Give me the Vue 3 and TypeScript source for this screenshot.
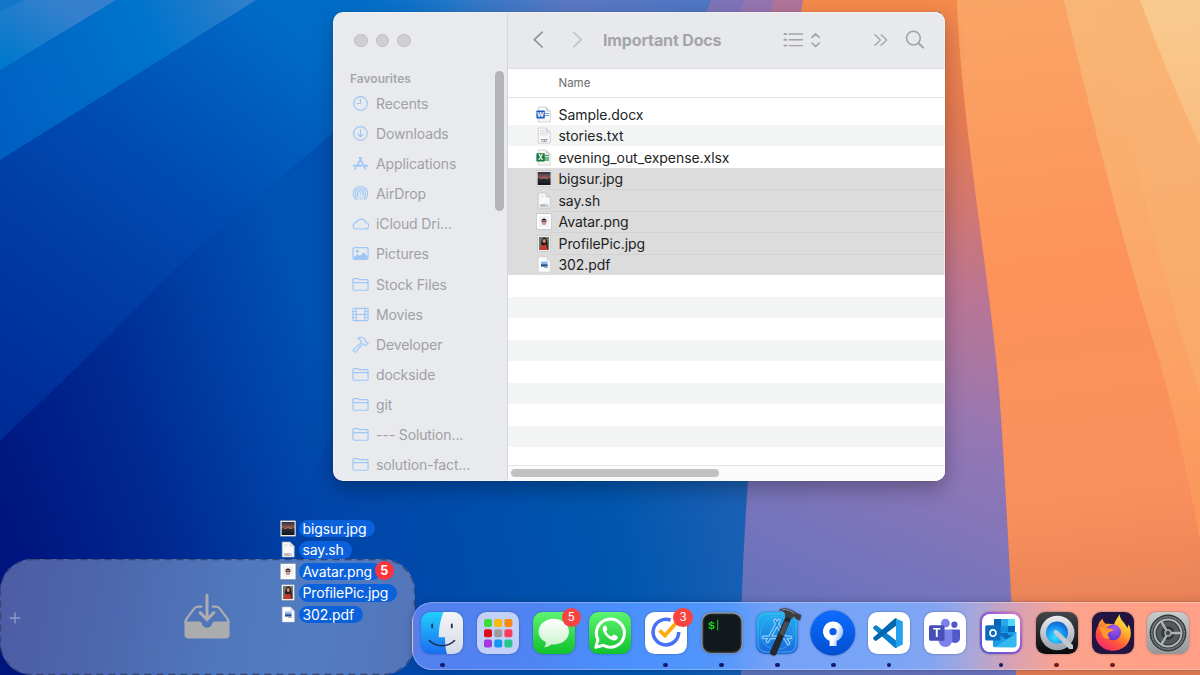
<script setup lang="ts">
interface Entry {
  name: string
  kind: string
}

interface DockApp {
  id: string
  running: boolean
  badge?: number
}

const sidebar: Entry[] = [
  { name: 'Recents', kind: 'clock' },
  { name: 'Downloads', kind: 'download' },
  { name: 'Applications', kind: 'apps' },
  { name: 'AirDrop', kind: 'airdrop' },
  { name: 'iCloud Dri...', kind: 'cloud' },
  { name: 'Pictures', kind: 'picture' },
  { name: 'Stock Files', kind: 'folder' },
  { name: 'Movies', kind: 'film' },
  { name: 'Developer', kind: 'hammer' },
  { name: 'dockside', kind: 'folder' },
  { name: 'git', kind: 'folder' },
  { name: '--- Solution...', kind: 'folder' },
  { name: 'solution-fact...', kind: 'folder' },
]

const picked: Entry[] = [
  { name: 'bigsur.jpg', kind: 'landscape' },
  { name: 'say.sh', kind: 'shell' },
  { name: 'Avatar.png', kind: 'avatar' },
  { name: 'ProfilePic.jpg', kind: 'profile' },
  { name: '302.pdf', kind: 'pdf' },
]

const files: Entry[] = [
  { name: 'Sample.docx', kind: 'word' },
  { name: 'stories.txt', kind: 'text' },
  { name: 'evening_out_expense.xlsx', kind: 'excel' },
  ...picked,
]

const rows: (Entry | null)[] = [...files, ...Array<null>(9).fill(null)]
const isPicked = (row: Entry | null) => row !== null && picked.includes(row)

const dock: DockApp[] = [
  { id: 'finder', running: true },
  { id: 'launchpad', running: false },
  { id: 'messages', running: false, badge: 5 },
  { id: 'whatsapp', running: false },
  { id: 'ticktick', running: true, badge: 3 },
  { id: 'terminal', running: true },
  { id: 'xcode', running: true },
  { id: 'sourcetree', running: true },
  { id: 'vscode', running: true },
  { id: 'teams', running: false },
  { id: 'outlook', running: true },
  { id: 'quicktime', running: true },
  { id: 'firefox', running: true },
  { id: 'settings', running: false },
]

const tiles = [
  ['#3ddc3a', '#f9b80c', '#f98a10'],
  ['#d90f1a', '#9a9a9f', '#fb3b5c'],
  ['#a03be0', '#1596f5', '#25c78e'],
]
</script>

<template>
  <div class="desktop">
    <svg class="wallpaper" viewBox="0 0 1200 675" preserveAspectRatio="none">
      <defs>
        <linearGradient id="wBase" gradientUnits="userSpaceOnUse" x1="0" y1="520" x2="340" y2="400">
          <stop offset="0" stop-color="#00147e" />
          <stop offset=".4" stop-color="#002890" />
          <stop offset=".7" stop-color="#003da2" />
          <stop offset="1" stop-color="#0052b2" />
        </linearGradient>
        <linearGradient id="wBand2" gradientUnits="userSpaceOnUse" x1="0" y1="400" x2="290" y2="20">
          <stop offset="0" stop-color="#002c98" />
          <stop offset=".3" stop-color="#003ba2" />
          <stop offset=".6" stop-color="#004cb2" />
          <stop offset="1" stop-color="#006cc8" />
        </linearGradient>
        <linearGradient id="wBand1" gradientUnits="userSpaceOnUse" x1="0" y1="120" x2="240" y2="0">
          <stop offset="0" stop-color="#0060c2" />
          <stop offset=".65" stop-color="#0074cc" />
          <stop offset="1" stop-color="#2e7ecb" />
        </linearGradient>
        <linearGradient id="wBand0" gradientUnits="userSpaceOnUse" x1="10" y1="65" x2="50" y2="0">
          <stop offset="0" stop-color="#0078cc" />
          <stop offset="1" stop-color="#3580cc" />
        </linearGradient>
        <linearGradient id="wTop" x1="0" x2="1" y1="0" y2="0">
          <stop offset="0" stop-color="#0076ce" stop-opacity="0" />
          <stop offset=".35" stop-color="#3078c8" />
          <stop offset=".6" stop-color="#5b78c4" />
          <stop offset="1" stop-color="#4c76c4" />
        </linearGradient>
        <linearGradient id="wBottom" gradientUnits="userSpaceOnUse" x1="240" y1="600" x2="760" y2="480">
          <stop offset="0" stop-color="#003ca4" stop-opacity="0" />
          <stop offset=".3" stop-color="#0048aa" />
          <stop offset=".7" stop-color="#0055ae" />
          <stop offset="1" stop-color="#1f62b6" />
        </linearGradient>
        <linearGradient id="wPurple" gradientUnits="userSpaceOnUse" x1="760" y1="660" x2="960" y2="200">
          <stop offset="0" stop-color="#5a70b8" />
          <stop offset=".25" stop-color="#7474bc" />
          <stop offset=".6" stop-color="#9577b4" />
          <stop offset=".85" stop-color="#b87696" />
          <stop offset="1" stop-color="#d9745c" />
        </linearGradient>
        <linearGradient id="wEdge" gradientUnits="userSpaceOnUse" x1="0" y1="0" x2="0" y2="480">
          <stop offset="0" stop-color="#f58a4c" />
          <stop offset=".25" stop-color="#e57a52" />
          <stop offset=".6" stop-color="#bd7590" stop-opacity=".8" />
          <stop offset="1" stop-color="#9577b4" stop-opacity="0" />
        </linearGradient>
        <linearGradient id="wOrange" gradientUnits="userSpaceOnUse" x1="970" y1="0" x2="1060" y2="675">
          <stop offset="0" stop-color="#f9a566" />
          <stop offset=".4" stop-color="#fd935a" />
          <stop offset=".75" stop-color="#f98f5c" />
          <stop offset="1" stop-color="#e07c54" />
        </linearGradient>
        <linearGradient id="wOrange2" gradientUnits="userSpaceOnUse" x1="1090" y1="0" x2="1200" y2="540">
          <stop offset="0" stop-color="#f8b676" />
          <stop offset=".5" stop-color="#fba869" />
          <stop offset="1" stop-color="#fb955c" />
        </linearGradient>
        <linearGradient id="wOrange3" gradientUnits="userSpaceOnUse" x1="1170" y1="0" x2="1200" y2="420">
          <stop offset="0" stop-color="#f9ca8e" />
          <stop offset="1" stop-color="#faa769" />
        </linearGradient>
      </defs>
      <rect width="1200" height="675" fill="url(#wBase)" />
      <path d="M-1 442L100 345L180 264L335 131H520V0H0Z" fill="url(#wBand2)" />
      <path d="M0 160L256 0H0Z" fill="url(#wBand1)" />
      <path d="M0 70L116 0H0Z" fill="url(#wBand0)" />
      <path d="M0 12L24 0H0Z" fill="#1277c8" />
      <rect x="330" width="400" height="300" fill="url(#wTop)" />
      <path d="M335 430L300 500L270 675H760V430Z" fill="url(#wBottom)" />
      <path d="M706 12L711 0H820V300H800Z" fill="#7f74b9" />
      <path d="M740 12L744 0H820V40H740Z" fill="#9575b0" />
      <path d="M770 12L774 0H820V40H770Z" fill="#b0749a" />
      <path d="M748 480C744 540 740 610 741 675H1020V300H760Z" fill="url(#wPurple)" />
      <path d="M930 90H1000V480H930Z" fill="url(#wPurple)" />
      <path d="M801 12L803 0H962L1004 480H940V12Z" fill="url(#wEdge)" />
      <path d="M957 0C960 110 990 280 999 390C1006 480 1010 590 1016 675H1200V0Z" fill="url(#wOrange)" />
      <path d="M1064 0C1087 100 1128 260 1150 330C1172 400 1187 470 1200 540V0Z" fill="url(#wOrange2)" />
      <path d="M1092 0C1125 115 1160 270 1200 395V0Z" fill="#f9b473" opacity=".45" />
      <path d="M1140 0C1160 55 1180 102 1200 145V0Z" fill="url(#wOrange3)" />
    </svg>

    <section class="window">
      <aside class="side">
        <div class="lights"><i /><i /><i /></div>
        <h2>Favourites</h2>
        <ul>
          <li v-for="item in sidebar" :key="item.name">
            <svg viewBox="0 0 18 18" class="side-icon">
              <g v-if="item.kind === 'clock'">
                <circle cx="9" cy="9" r="7.2" />
                <path d="M9 4.8V9H5.6" />
              </g>
              <g v-else-if="item.kind === 'download'">
                <circle cx="9" cy="9" r="7.2" />
                <path d="M9 5.2V12.2M6.3 9.7L9 12.4L11.7 9.7" />
              </g>
              <g v-else-if="item.kind === 'apps'" class="bold">
                <path d="M10 3L5 11.8M8 3L14 14.4M1.8 11.4H10M13.2 11.4H16.2M4 13.6L3.4 14.6" />
              </g>
              <g v-else-if="item.kind === 'airdrop'">
                <path d="M5 15.6A7.7 7.7 0 1 1 13 15.6" />
                <path d="M5.6 13.2A5.4 5.4 0 1 1 12.4 13.2" />
                <path d="M6.7 11A3.1 3.1 0 1 1 11.3 11" />
                <circle cx="9" cy="9" r="1" class="solid" />
                <path d="M9 10.5L6.3 15.6H11.7Z" class="solid" opacity=".45" />
              </g>
              <path
                v-else-if="item.kind === 'cloud'"
                d="M4 14.8H14.4A3.3 3.3 0 0 0 14.7 8.2A4.9 4.9 0 0 0 5.5 7.1A2.9 2.9 0 0 0 2.8 9.1A3 3 0 0 0 4 14.8Z"
              />
              <g v-else-if="item.kind === 'picture'">
                <rect x="1" y="2.8" width="16" height="12.4" rx="1.6" />
                <circle cx="5.6" cy="6.6" r="1.5" class="solid" />
                <path d="M1.4 13L6 9.8L8.4 11.7L12 7.8L16.6 11.8V14.9H1.4Z" class="solid" />
              </g>
              <g v-else-if="item.kind === 'film'">
                <rect x="1" y="2.6" width="16" height="12.8" rx="1.2" />
                <path d="M4.5 2.6V15.4M13.5 2.6V15.4M4.5 9H13.5M1 5.8H4.5M1 9H4.5M1 12.2H4.5M13.5 5.8H17M13.5 9H17M13.5 12.2H17" />
              </g>
              <path
                v-else-if="item.kind === 'hammer'"
                d="M6.2 2.8C8.6 .4 11.4 1.1 13.2 3L14.2 4.2L14 5.4L15.2 6.5L17.2 7.6L14.4 10.4L12.8 8.6L11.4 8.2L4.2 16.6C2.6 17.7 .7 16 1.6 14.4L9.8 7.1L9.6 5C8.8 3.5 7.6 3 6.2 2.8Z"
              />
              <path
                v-else
                d="M1 7H17M1 4.6V13.8A1.3 1.3 0 0 0 2.3 15.1H15.7A1.3 1.3 0 0 0 17 13.8V5.2A1.3 1.3 0 0 0 15.7 3.9H8.2L6.7 2.8H2.3A1.3 1.3 0 0 0 1 4.1Z"
              />
            </svg>
            <span>{{ item.name }}</span>
          </li>
        </ul>
        <div class="v-thumb" />
      </aside>

      <main class="pane">
        <header class="toolbar">
          <svg class="nav" viewBox="0 0 52 20">
            <path d="M12.2 2.2L4.3 9.6L12.2 17" stroke="#8e8f93" />
            <path d="M43.6 2.4L51.2 9.6L43.6 16.8" stroke="#c2c3c7" />
          </svg>
          <h1>Important Docs</h1>
          <svg class="view" viewBox="0 0 40 20">
            <path d="M6 4H19.5M6 9.8H19.5M6 15.6H19.5" />
            <path d="M1.4 4H3.2M1.4 9.8H3.2M1.4 15.6H3.2" stroke-width="1.9" />
            <path d="M29 7.3L32.6 3.8L36.2 7.3M29 13L32.6 16.5L36.2 13" stroke-width="1.7" />
          </svg>
          <svg class="more" viewBox="0 0 14 14"><path d="M1 1.7L6.4 7L1 12.3M7.2 1.7L12.6 7L7.2 12.3" /></svg>
          <svg class="search" viewBox="0 0 20 20">
            <circle cx="8.4" cy="8.1" r="6.9" stroke-width="1.6" />
            <path d="M13.4 13L18 17.4" stroke-width="2.1" />
          </svg>
        </header>
        <div class="head">Name</div>
        <ul class="rows">
          <li v-for="(row, i) in rows" :key="i" :class="{ picked: isPicked(row) }">
            <template v-if="row">
              <svg class="file-icon"><use :href="'#file-' + row.kind" /></svg>
              <span>{{ row.name }}</span>
            </template>
          </li>
        </ul>
        <footer class="h-track"><div class="h-thumb" /></footer>
      </main>
    </section>

    <svg class="symbols" width="0" height="0">
      <defs>
        <linearGradient id="dusk" x1="0" y1="0" x2="0" y2="1">
          <stop offset="0" stop-color="#2b2d40" />
          <stop offset=".4" stop-color="#8b5a50" />
          <stop offset=".55" stop-color="#2c2b35" />
          <stop offset="1" stop-color="#11151f" />
        </linearGradient>
        <symbol id="file-page" viewBox="0 0 16 17">
          <path d="M2.2 1H10L14.2 5.2V16H2.2Z" fill="#f8f8f9" stroke="#b9babd" stroke-width=".6" />
          <path d="M10 1V5.2H14.2Z" fill="#dcdde0" stroke="#b9babd" stroke-width=".4" />
        </symbol>
        <symbol id="file-word" viewBox="0 0 16 17">
          <use href="#file-page" />
          <path d="M8.5 7.5H13M8.5 9.5H13" stroke="#6ca4ef" stroke-width="1.1" />
          <rect x=".4" y="4.4" width="8.4" height="8.2" rx=".8" fill="#1f5bbd" />
          <text x="4.6" y="11" text-anchor="middle" font-size="6.8" font-weight="700" fill="#fff">W</text>
        </symbol>
        <symbol id="file-excel" viewBox="0 0 16 17">
          <use href="#file-page" />
          <path d="M8.5 6.6H13M8.5 9H13M8.5 11H13" stroke="#3fa36a" stroke-width="1.3" />
          <rect x=".4" y="4.2" width="8.4" height="8.4" rx=".8" fill="#14783f" />
          <text x="4.6" y="10.9" text-anchor="middle" font-size="7" font-weight="700" fill="#fff">X</text>
        </symbol>
        <symbol id="file-text" viewBox="0 0 16 17">
          <use href="#file-page" />
          <path d="M4 3.5H9M4 5H9M4 6.5H12M4 8H12" stroke="#d0d0d2" stroke-width=".6" />
          <text x="8.2" y="14.6" text-anchor="middle" font-size="3.4" font-weight="700" fill="#666">TXT</text>
        </symbol>
        <symbol id="file-shell" viewBox="0 0 16 17">
          <use href="#file-page" />
          <path d="M4 3.5H7M4 5H8" stroke="#d8d8da" stroke-width=".6" />
          <text x="8.2" y="14.6" text-anchor="middle" font-size="2.8" font-weight="700" fill="#777">SHELL</text>
        </symbol>
        <symbol id="file-landscape" viewBox="0 0 16 17">
          <rect x=".5" y=".8" width="15.2" height="15.4" fill="#fff" stroke="#aaa" stroke-width=".4" />
          <rect x="1.6" y="1.9" width="13" height="13.2" fill="url(#dusk)" />
          <path d="M4 8.8Q8 6.5 12 8.6" stroke="#c9825c" stroke-width=".8" fill="none" />
        </symbol>
        <symbol id="file-avatar" viewBox="0 0 16 17">
          <rect x=".5" y=".8" width="15.2" height="15.4" fill="#fff" stroke="#aaa" stroke-width=".5" />
          <rect x="2.6" y="2.8" width="11" height="11.4" fill="#f1f2f5" />
          <ellipse cx="8" cy="8.9" rx="2.4" ry="3.1" fill="#c59e92" />
          <path d="M5.4 8.2C5 4.6 11 4.6 10.6 8.2L10 7.2H6Z" fill="#2c2529" />
          <path d="M5.8 8.4H7.6M8.4 8.4H10.2" stroke="#3a2c30" stroke-width="1" />
        </symbol>
        <symbol id="file-profile" viewBox="0 0 16 17">
          <rect x="1.8" y=".8" width="12.4" height="15.4" fill="#fff" stroke="#aaa" stroke-width=".4" />
          <rect x="2.9" y="1.9" width="10.2" height="13.2" fill="#6b7a6a" />
          <path d="M5.4 15C4.6 10 5 3 8.2 2.6C11.6 3 12 9 11.6 15Z" fill="#2a1518" />
          <ellipse cx="8.2" cy="6" rx="1.6" ry="2.1" fill="#d09078" />
          <path d="M3.4 15.1L5.6 9.6L8 10.6L10 9L11.4 15.1Z" fill="#c8382e" />
        </symbol>
        <symbol id="file-pdf" viewBox="0 0 16 17">
          <path d="M2.2 1H10.4L14.4 5V16H2.2Z" fill="#fbfcfe" stroke="#c4c5c9" stroke-width=".5" />
          <path d="M10.4 1V5H14.4Z" fill="#dcdfe6" />
          <rect x="5" y="5.6" width="6.6" height="2.6" fill="#8fb9ee" />
          <rect x="5" y="8.2" width="6.6" height="2.4" fill="#24508e" />
          <path d="M8 11.6H12" stroke="#888" stroke-width=".7" />
        </symbol>
      </defs>
    </svg>

    <section class="drop">
      <svg class="outline" viewBox="0 0 415 116"><rect x=".6" y=".6" width="413.8" height="114.8" rx="32" /></svg>
      <svg class="plus" viewBox="0 0 12 12"><path d="M6 .6V11.4M.6 6H11.4" /></svg>
      <svg class="tray" viewBox="0 0 46 46">
        <path d="M.5 27.5H14.8C16.6 27.5 17.6 28.2 17.9 29.8C19 35.2 27 35.2 28.1 29.8C28.4 28.2 29.4 27.5 31.2 27.5H45.5V40.5A4 4 0 0 1 41.5 44.5H4.5A4 4 0 0 1 .5 40.5Z" fill="#abacae" />
        <path d="M1.4 28.4C1.4 26.6 1.8 25.6 3 24.2L10.4 14.4C11.4 13.1 12.6 12.6 14.2 12.6H17.4M28.6 12.6H31.8C33.4 12.6 34.6 13.1 35.6 14.4L43 24.2C44.2 25.6 44.6 26.6 44.6 28.4" />
        <path d="M23 1.4V25.6M16.2 18.6L23 25.8L29.8 18.6" stroke-width="3" />
      </svg>
    </section>

    <ul class="drag">
      <li v-for="item in picked" :key="item.name">
        <svg class="file-icon"><use :href="'#file-' + item.kind" /></svg>
        <span>{{ item.name }}</span>
      </li>
    </ul>
    <b class="count">{{ picked.length }}</b>

    <nav class="dock">
      <div v-for="app in dock" :key="app.id" class="app">
        <svg viewBox="0 0 42 42" class="app-icon">
          <g v-if="app.id === 'finder'">
            <defs>
              <linearGradient id="fBlue" x1="0" y1="0" x2="0" y2="1"><stop offset="0" stop-color="#1fd0fd" /><stop offset="1" stop-color="#1b6cf0" /></linearGradient>
              <linearGradient id="fWhite" x1="0" y1="0" x2="0" y2="1"><stop offset="0" stop-color="#f4f5f8" /><stop offset="1" stop-color="#d5dae6" /></linearGradient>
            </defs>
            <rect width="42" height="42" rx="9.5" fill="url(#fBlue)" />
            <path d="M22.6 0H32.5A9.5 9.5 0 0 1 42 9.5V32.5A9.5 9.5 0 0 1 32.5 42H26C24.8 38 24 32 24 25.2H17.8C17.8 16 19.6 6.5 22.6 0Z" fill="url(#fWhite)" />
            <path d="M11.2 12.4V15.4M30.8 12.4V15.4" stroke="#15395c" stroke-width="1.9" stroke-linecap="round" />
            <path d="M8.4 28.5C15 35.4 27 35.4 33.6 28.5" fill="none" stroke="#1b2a44" stroke-width="1.5" stroke-linecap="round" />
          </g>
          <g v-else-if="app.id === 'launchpad'">
            <rect width="42" height="42" rx="9.5" fill="#c3d1f8" />
            <template v-for="(line, r) in tiles" :key="r">
              <rect v-for="(fill, c) in line" :key="c" :x="7 + c * 10.2" :y="7 + r * 10.2" width="8" height="8" rx="2" :fill="fill" />
            </template>
          </g>
          <g v-else-if="app.id === 'messages'">
            <defs>
              <linearGradient id="gGreen" x1="0" y1="0" x2="0" y2="1"><stop offset="0" stop-color="#5df471" /><stop offset="1" stop-color="#10c22d" /></linearGradient>
              <linearGradient id="gBubble" x1="0" y1="0" x2="0" y2="1"><stop offset="0" stop-color="#fff" /><stop offset="1" stop-color="#c9f3cb" /></linearGradient>
            </defs>
            <rect width="42" height="42" rx="9.5" fill="url(#gGreen)" />
            <path d="M20.8 6.8C12.4 6.8 5.6 12.4 5.6 19.6C5.6 24 8.4 28 12.9 30.2C13 32 12.2 33.8 10.9 35.2C13.9 35.2 16.6 34 18.3 32.2C28.5 33.6 36 27.6 36 19.6C36 12.4 29.2 6.8 20.8 6.8Z" fill="url(#gBubble)" />
          </g>
          <g v-else-if="app.id === 'whatsapp'">
            <rect width="42" height="42" rx="9.5" fill="url(#gGreen)" />
            <path d="M6.8 35.4L9 27.6A14 14 0 1 1 14.4 33.2Z" fill="none" stroke="#fff" stroke-width="3" stroke-linejoin="round" />
            <path d="M15.8 13.6C14 14.4 13.2 16.6 14 18.8C15.6 23.4 19 26.6 23.6 28.2C25.8 29 28.2 27.8 28.8 26C29.2 24.6 28.8 24.4 27.6 23.8L25.4 22.7C24.6 22.3 24.2 22.6 23.8 23.2C22.9 24.5 22.6 24.5 21.4 23.9C19.6 23 18.4 21.8 17.4 20C17 19.2 17.4 19 18 18.2C18.4 17.6 18.4 17.2 18.2 16.6L17.2 14.2C16.9 13.4 16.4 13.4 15.8 13.6Z" fill="#fff" />
          </g>
          <g v-else-if="app.id === 'ticktick'">
            <rect width="42" height="42" rx="9.5" fill="#fff" />
            <path d="M25.6 8.2A12.8 12.8 0 1 0 33.7 20" fill="none" stroke="#4870f5" stroke-width="3.5" />
            <path d="M14.6 18.4L20 23.6L31.5 10.5" fill="none" stroke="#ffab0d" stroke-width="3.8" />
          </g>
          <g v-else-if="app.id === 'terminal'">
            <rect x=".5" y=".5" width="41" height="41" rx="9.5" fill="#a7aaa9" />
            <rect x="1.4" y="1.5" width="39.2" height="39.4" rx="8.6" fill="#343638" />
            <rect x="2.6" y="2.6" width="36.8" height="36.8" rx="7.6" fill="#11191c" />
            <text x="7" y="17.2" class="mono" font-size="11.5" font-weight="700" fill="#1fd91f">$</text>
            <path d="M16.6 7.8V18.4" stroke="#17a61b" stroke-width="1.2" />
          </g>
          <g v-else-if="app.id === 'xcode'">
            <defs>
              <linearGradient id="xBlue" x1="0" y1="0" x2="0" y2="1"><stop offset="0" stop-color="#20b4ef" /><stop offset="1" stop-color="#1a66dc" /></linearGradient>
            </defs>
            <rect width="42" height="42" rx="9.5" fill="url(#xBlue)" />
            <rect x="2" y="2" width="38" height="38" rx="8" fill="none" stroke="#57b9f5" stroke-width=".8" />
            <circle cx="21" cy="21" r="16.5" fill="none" stroke="#48a9f2" stroke-width=".7" />
            <g fill="none" stroke="#a8dcfd" stroke-width="3.6" stroke-linecap="round"><path d="M23 8.5L11.4 29.4M19 8.5L32.4 31.5M7.6 25.4H21M27.5 25.4H34.4" /></g>
            <g fill="none" stroke="#288ee5" stroke-width="1.8" stroke-linecap="round"><path d="M23 8.5L11.4 29.4M19 8.5L32.4 31.5M7.6 25.4H21M27.5 25.4H34.4" /></g>
            <path d="M30 4L35.4 6L20.4 42C19.2 45 12.9 43.3 14 39.7Z" fill="#24272d" />
            <path d="M28.8 9L33.4 10.6L27.6 24L23.2 22Z" fill="#4a4c51" />
            <path d="M23.4 -2.4C28 -5 33 -4 38.4 -.2L41.4 1.4L45.4 3L44 8.6L40 7.2L38 4.4L35.8 6.8L29 4.8C29.6 .4 27.4 -1.6 23.6 -1.2Z" fill="#3b3d41" />
            <path d="M26 -2.2C30.6 -3.2 34 -1.4 38.4 1.6" fill="none" stroke="#9a9ca1" stroke-width="1" />
          </g>
          <g v-else-if="app.id === 'sourcetree'">
            <defs>
              <linearGradient id="sBlue" x1="0" y1="0" x2="0" y2="1"><stop offset="0" stop-color="#0d6cff" /><stop offset="1" stop-color="#034fd2" /></linearGradient>
              <linearGradient id="sFade" x1="0" y1=".2" x2="1" y2=".6"><stop offset=".6" stop-color="#fff" /><stop offset="1" stop-color="#8fb6f9" /></linearGradient>
            </defs>
            <circle cx="20.8" cy="21" r="22.4" fill="url(#sBlue)" />
            <path d="M21 9.4A10.1 10.1 0 0 0 17.6 29V34H24.6V29A10.1 10.1 0 0 0 21 9.4ZM21 15.9A3.7 3.7 0 1 1 21 23.3A3.7 3.7 0 0 1 21 15.9Z" fill="url(#sFade)" fill-rule="evenodd" />
          </g>
          <g v-else-if="app.id === 'vscode'">
            <rect width="42" height="42" rx="9.5" fill="#fff" />
            <path d="M28.4 28.7L8.8 13.6C8 13 7.2 13.1 6.7 13.7L5.5 14.9C4.9 15.5 5 16.4 5.6 17L26.2 35.2C27 36 28 36.1 28.8 35.7Z" fill="#0a7fcc" />
            <path d="M28.4 13.5L8.8 28.6C8 29.2 7.2 29.1 6.7 28.5L5.5 27.3C4.9 26.7 5 25.8 5.6 25.2L26.2 7C27 6.2 28 6.1 28.8 6.5Z" fill="#0067af" />
            <path d="M28 6.4L34.8 9.6V32.6L28 35.8Z" fill="#24a0ee" />
          </g>
          <g v-else-if="app.id === 'teams'">
            <rect width="42" height="42" rx="9.5" fill="#fff" />
            <circle cx="21.4" cy="11.2" r="4.4" fill="#7b83eb" />
            <circle cx="30.4" cy="12.7" r="3.1" fill="#5059c9" />
            <path d="M27 17.6H34.8A1.2 1.2 0 0 1 36 18.8V26C36 32 28 32.4 26.4 28Z" fill="#5059c9" />
            <path d="M14.5 17.6H28.3V27.5C28.3 37.4 14.5 37.4 14.5 27.5Z" fill="#7b83eb" />
            <rect x="5" y="13.3" width="15.5" height="15.5" rx="1.6" fill="#464eb8" />
            <text x="12.7" y="25.4" text-anchor="middle" font-size="12" font-weight="700" fill="#fff">T</text>
          </g>
          <g v-else-if="app.id === 'outlook'">
            <defs>
              <linearGradient id="oRing" x1="0" y1="1" x2="1" y2="0"><stop offset="0" stop-color="#4f59d6" /><stop offset=".55" stop-color="#9454d8" /><stop offset="1" stop-color="#e57fc3" /></linearGradient>
            </defs>
            <rect width="42" height="42" rx="9.5" fill="url(#oRing)" />
            <rect x="2" y="2" width="38" height="38" rx="7.6" fill="#fff" />
            <path d="M14 7H35V21H14Z" fill="#1490df" />
            <path d="M14 7H21V14H14ZM28 14H35V21H28Z" fill="#0364b8" />
            <path d="M21 7H28V14H21Z" fill="#28a8ea" />
            <path d="M28 7H35V14H28Z" fill="#50d9ff" />
            <path d="M13 20L36.3 20V33.6A1.6 1.6 0 0 1 34.7 35.2H14.6A1.6 1.6 0 0 1 13 33.6Z" fill="#1c9be6" />
            <path d="M21 21H28V23H33L27 28L19 22Z" fill="#0a6bbd" />
            <path d="M36.3 21L15 34.9L34.7 35.2A1.6 1.6 0 0 0 36.3 33.6Z" fill="#35b8f1" />
            <rect x="5.2" y="13.2" width="15.4" height="15.4" rx="1.6" fill="#0f6cbd" />
            <text x="12.9" y="25" text-anchor="middle" font-size="11" font-weight="700" fill="#fff">O</text>
          </g>
          <g v-else-if="app.id === 'quicktime'">
            <defs>
              <linearGradient id="qDark" x1="0" y1="0" x2="0" y2="1"><stop offset="0" stop-color="#454649" /><stop offset="1" stop-color="#08090a" /></linearGradient>
              <linearGradient id="qRing" x1="0" y1="0" x2="0" y2="1"><stop offset="0" stop-color="#e9ebee" /><stop offset="1" stop-color="#9ba1ab" /></linearGradient>
              <radialGradient id="qBlue" cx=".4" cy=".7" r=".75"><stop offset="0" stop-color="#35e0ff" /><stop offset=".6" stop-color="#1493f2" /><stop offset="1" stop-color="#1557c8" /></radialGradient>
            </defs>
            <rect width="42" height="42" rx="9.5" fill="url(#qDark)" />
            <circle cx="21.3" cy="21" r="17.2" fill="url(#qRing)" />
            <circle cx="21" cy="20.6" r="11" fill="url(#qBlue)" />
            <path d="M18.3 21.8C16.3 19.5 18.8 16.6 21.4 18.5L37 33.2V37H33.2Z" fill="#c4c8cf" />
          </g>
          <g v-else-if="app.id === 'firefox'">
            <defs>
              <linearGradient id="foxBody" x1=".85" y1="0" x2=".2" y2="1"><stop offset="0" stop-color="#fff04a" /><stop offset=".35" stop-color="#ffb52c" /><stop offset=".65" stop-color="#ff5a38" /><stop offset="1" stop-color="#f32474" /></linearGradient>
              <radialGradient id="foxGlobe" cx=".6" cy=".2" r=".9"><stop offset="0" stop-color="#a95cf2" /><stop offset="1" stop-color="#5a2dc6" /></radialGradient>
            </defs>
            <rect width="42" height="42" rx="9.5" fill="#231540" />
            <path d="M27.6 2.2C26.2 5 23.2 8.2 22 12.6C18 11.5 15 12 13.2 11.6C11.8 10.4 10.8 9 10.6 6.8C8 8.8 6.6 11.2 6 14C2.6 20 2.8 27 7 32.2C14 41 29 41 35.6 31.6C40 25.4 39.5 17 36.4 12.6C36 14 36 15 35.2 16C34 11.5 28 8.5 27.6 2.2Z" fill="url(#foxBody)" />
            <circle cx="21.2" cy="20.4" r="7.8" fill="url(#foxGlobe)" />
            <path d="M7.4 15.8C10.8 14 13.4 15 15.7 16.5C18 16.2 20.4 16.6 21.5 17.8C21 19.8 17.2 19.2 16 21.4C15.2 23.2 16.2 25.4 18.6 25.8C14.4 28.2 10.4 26 10 21.8Z" fill="#ff9730" />
          </g>
          <g v-else>
            <defs>
              <linearGradient id="pGrey" x1="0" y1="0" x2="0" y2="1"><stop offset="0" stop-color="#c7cdcb" /><stop offset="1" stop-color="#92989a" /></linearGradient>
            </defs>
            <rect width="42" height="42" rx="9.5" fill="url(#pGrey)" />
            <circle cx="21" cy="21" r="18.4" fill="#34383a" />
            <circle cx="21" cy="21" r="16.2" fill="none" stroke="#8b9192" stroke-width="1.6" stroke-dasharray="1.1 .5" />
            <circle cx="21" cy="21" r="13.4" fill="none" stroke="#b0b6b7" stroke-width="2" />
            <circle cx="21" cy="21" r="9" fill="none" stroke="#54595b" stroke-width="4.6" />
            <path d="M21 21H34M21 21L14.5 9.8M21 21L14.5 32.2" stroke="#b0b6b7" stroke-width="2.3" />
            <circle cx="21" cy="21" r="3" fill="#44494b" stroke="#a8aeaf" stroke-width="1.4" />
          </g>
        </svg>
        <em v-if="app.badge">{{ app.badge }}</em>
        <i v-if="app.running" />
      </div>
    </nav>
  </div>
</template>

<style>
body {
  margin: 0;
  overflow: hidden;
}
</style>

<style scoped>
.desktop {
  position: relative;
  width: 1200px;
  height: 675px;
  overflow: hidden;
  font-family: Inter, 'Liberation Sans', sans-serif;
}
ul {
  list-style: none;
  margin: 0;
  padding: 0;
}
svg {
  display: block;
  flex: none;
}
.wallpaper {
  position: absolute;
  inset: 0;
  width: 100%;
  height: 100%;
}
.symbols {
  position: absolute;
}

.window {
  position: absolute;
  left: 333px;
  top: 12px;
  width: 612px;
  height: 468.5px;
  display: flex;
  border-radius: 10px;
  overflow: hidden;
  background: #e9eaee;
  box-shadow: 0 0 1px rgba(0, 0, 0, 0.45), 0 8px 20px rgba(0, 0, 0, 0.28);
}
.window::after {
  content: '';
  position: absolute;
  inset: 0;
  border-radius: 10px;
  box-shadow: inset 0 0 0 1px rgba(255, 255, 255, 0.4);
}
.side {
  position: relative;
  box-sizing: border-box;
  width: 175px;
  flex: none;
  border-right: 1px solid #d6d7db;
  padding: 21.5px 0 0 17px;
}
.lights {
  display: flex;
  gap: 8px;
  padding-left: 4px;
}
.lights i {
  box-sizing: border-box;
  width: 13.5px;
  height: 13.5px;
  border-radius: 50%;
  background: #cfcfd2;
  border: 1px solid #bfbfc2;
}
.side h2 {
  margin: 23.5px 0 0;
  font-size: 12px;
  line-height: 15px;
  font-weight: 600;
  color: #a5a6aa;
}
.side ul {
  margin-top: 3px;
}
.side li {
  display: flex;
  align-items: center;
  gap: 7px;
  height: 30.08px;
  padding-left: 2px;
  font-size: 14px;
  letter-spacing: -0.12px;
  color: #a0a1a5;
  white-space: nowrap;
}
.side-icon {
  width: 17px;
  height: 17px;
  fill: none;
  stroke: #9fc7f5;
  stroke-width: 1.25;
  stroke-linecap: round;
  stroke-linejoin: round;
}
.side-icon .bold {
  stroke-width: 1.9;
}
.side-icon .solid {
  fill: #9fc7f5;
  stroke: none;
}
.v-thumb {
  position: absolute;
  left: 162px;
  top: 59px;
  width: 9px;
  height: 140px;
  border-radius: 5px;
  background: #b3b4b8;
}

.pane {
  flex: 1;
  display: flex;
  flex-direction: column;
  min-width: 0;
  background: #fff;
}
.toolbar {
  box-sizing: border-box;
  height: 57px;
  padding: 0 20px 0 21.5px;
  display: flex;
  align-items: center;
  background: #e8e9ed;
  border-bottom: 1px solid #dddee1;
}
.toolbar svg {
  fill: none;
  stroke: #a3a4a8;
  stroke-width: 1.4;
  stroke-linecap: round;
  stroke-linejoin: round;
}
.toolbar .nav {
  width: 52px;
  height: 20px;
  stroke-width: 1.6;
}
.toolbar h1 {
  margin: 0 0 0 21.5px;
  width: 182px;
  font-size: 16px;
  letter-spacing: -0.14px;
  font-weight: 700;
  color: #a4a5a8;
  white-space: nowrap;
}
.view {
  width: 40px;
  height: 20px;
}
.more {
  width: 14px;
  height: 14px;
  margin-left: 51.5px;
}
.search {
  width: 20px;
  height: 20px;
  margin-left: 17px;
}
.head {
  box-sizing: border-box;
  height: 29px;
  padding-left: 50.5px;
  line-height: 28px;
  font-size: 11.5px;
  color: #6c6c6e;
  border-bottom: 1px solid #e2e3e4;
}
.rows {
  flex: 1;
  min-height: 0;
  overflow: hidden;
  padding-top: 5.5px;
}
.rows li {
  box-sizing: border-box;
  display: flex;
  align-items: center;
  gap: 6.5px;
  height: 21.49px;
  padding-left: 28px;
  font-size: 14px;
  letter-spacing: -0.06px;
  color: #232324;
}
.rows li:nth-child(even) {
  background: #f3f5f5;
}
.rows li.picked {
  background: #dcdcdc;
}
.rows li.picked + li.picked {
  background: linear-gradient(#d2d2d2, #d2d2d2) 42px 0 / 100% 1px no-repeat #dcdcdc;
}
.file-icon {
  width: 16px;
  height: 17px;
}
.h-track {
  box-sizing: border-box;
  height: 15.5px;
  padding: 2.6px 0 0 3px;
  background: #fafafa;
  border-top: 1px solid #e6e6e6;
}
.h-thumb {
  width: 207.5px;
  height: 8.5px;
  border-radius: 5px;
  background: #c1c1c1;
}

.drop {
  position: absolute;
  left: 0;
  top: 559px;
  box-sizing: border-box;
  width: 415px;
  height: 116px;
  display: flex;
  align-items: center;
  padding-left: 8.5px;
  gap: 163.5px;
  border-radius: 32px;
  background: linear-gradient(100deg, #4d5ca4 0%, #4d66ae 25%, #5078bc 55%, #527cc2 75%, #5474b8 100%);
}
.outline {
  position: absolute;
  inset: 0;
  width: 415px;
  height: 116px;
  fill: none;
  stroke: #36486f;
  stroke-width: 1.1;
  stroke-dasharray: 7 5;
}
.plus {
  width: 12px;
  height: 12px;
  margin-top: 2px;
  stroke: #8f9cc8;
  stroke-width: 1.3;
}
.tray {
  width: 46px;
  height: 46px;
  fill: none;
  stroke: #abacae;
  stroke-width: 2.2;
  stroke-linecap: round;
  stroke-linejoin: round;
}
.tray path[fill] {
  stroke: none;
}

.drag {
  position: absolute;
  left: 280px;
  top: 517.6px;
}
.drag li {
  display: flex;
  align-items: center;
  gap: 2.5px;
  height: 21.5px;
  font-size: 14px;
  letter-spacing: -0.12px;
  color: #fff;
}
.drag span {
  padding: 0 8.6px 0 4px;
  height: 17.5px;
  line-height: 17.5px;
  border-radius: 9px;
  background: #0b61dc;
}
.count {
  position: absolute;
  left: 374.5px;
  top: 560.5px;
  width: 19.5px;
  height: 19.5px;
  border-radius: 50%;
  background: #fa343b;
  color: #fff;
  font-size: 12.5px;
  font-weight: 700;
  line-height: 19.5px;
  text-align: center;
}

.dock {
  position: absolute;
  left: 412px;
  top: 602px;
  box-sizing: border-box;
  width: 812px;
  height: 67.5px;
  display: flex;
  padding-left: 1.4px;
  border: 1px solid rgba(255, 255, 255, 0.28);
  border-radius: 20px;
  background: linear-gradient(
    97deg,
    #5480ee 0%,
    #4f84f2 15%,
    #4a90fc 26%,
    #5296fb 38%,
    #76a2f6 45%,
    #79a5f8 57%,
    #82a5f2 64%,
    #a8a6da 69%,
    #d8a2b4 74%,
    #fba38f 80%,
    #ffa086 90%,
    #ff9f88 100%
  );
  box-shadow: 0 0 1px rgba(0, 0, 30, 0.6), 0 0 9px rgba(0, 0, 40, 0.18);
}
.app {
  position: relative;
  flex: none;
  width: 55.86px;
  display: flex;
  flex-direction: column;
  align-items: center;
  padding-top: 9.4px;
}
.app-icon {
  width: 42px;
  height: 42px;
  overflow: visible;
  filter: drop-shadow(0 0.5px 0.8px rgba(0, 0, 30, 0.35));
}
.mono {
  font-family: 'Liberation Mono', monospace;
}
.app i {
  width: 4.6px;
  height: 4.6px;
  margin-top: 8.2px;
  border-radius: 50%;
  background: #14186e;
}
.app:nth-child(n + 12) i {
  background: #6e1d18;
}
.app em {
  position: absolute;
  left: 35.5px;
  top: 4.5px;
  width: 19.5px;
  height: 19.5px;
  border-radius: 50%;
  background: #f74441;
  color: #fff;
  font-size: 11.5px;
  font-style: normal;
  line-height: 19.5px;
  text-align: center;
}
</style>
